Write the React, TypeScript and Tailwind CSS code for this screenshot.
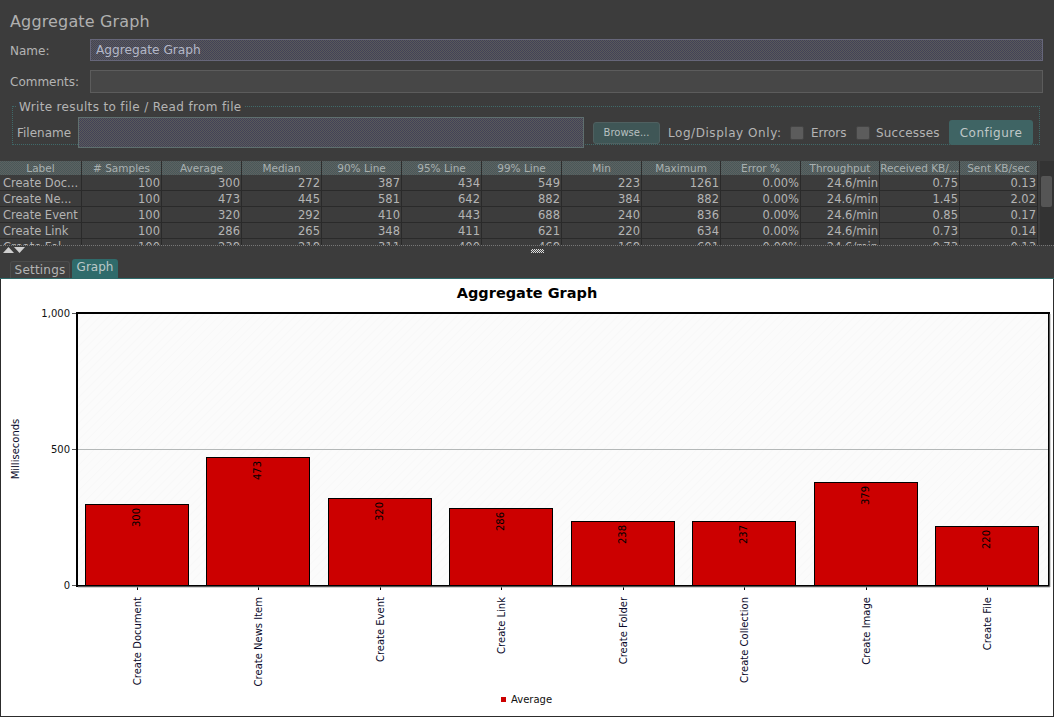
import React from "react";

const cols = "grid grid-cols-[82px_80px_80px_80px_80px_80px_80px_80px_79px_80px_79px_80px_78px]";
const headers = ["Label", "# Samples", "Average", "Median", "90% Line", "95% Line", "99% Line", "Min", "Maximum", "Error %", "Throughput", "Received KB/...", "Sent KB/sec"];
const rows = [
  ["Create Doc...", "100", "300", "272", "387", "434", "549", "223", "1261", "0.00%", "24.6/min", "0.75", "0.13"],
  ["Create Ne...", "100", "473", "445", "581", "642", "882", "384", "882", "0.00%", "24.6/min", "1.45", "2.02"],
  ["Create Event", "100", "320", "292", "410", "443", "688", "240", "836", "0.00%", "24.6/min", "0.85", "0.17"],
  ["Create Link", "100", "286", "265", "348", "411", "621", "220", "634", "0.00%", "24.6/min", "0.73", "0.14"],
  ["Create Fol...", "100", "238", "218", "311", "400", "468", "168", "601", "0.00%", "24.6/min", "0.73", "0.13"],
];
const bars = [
  { x: 85, v: 300, top: 504, name: "Create Document" },
  { x: 206, v: 473, top: 457, name: "Create News Item" },
  { x: 328, v: 320, top: 498, name: "Create Event" },
  { x: 449, v: 286, top: 508, name: "Create Link" },
  { x: 571, v: 238, top: 521, name: "Create Folder" },
  { x: 692, v: 237, top: 521, name: "Create Collection" },
  { x: 814, v: 379, top: 482, name: "Create Image" },
  { x: 935, v: 220, top: 526, name: "Create File" },
];
const dither = "bg-[conic-gradient(#424258_25%,#5a5a5a_0_50%,#424258_0_75%,#5a5a5a_0)] bg-[length:2px_2px]";

function Chart() {
  const f = "'DejaVu Sans', sans-serif";
  return (
    <svg width="1052" height="437" viewBox="1 279 1052 437" className="block">
      <defs>
        <pattern id="hatch" width="6" height="6" patternUnits="userSpaceOnUse" patternTransform="rotate(45)">
          <rect width="6" height="6" fill="#fbfbfb" />
          <line x1="0" y1="0" x2="0" y2="6" stroke="#f8f8f8" strokeWidth="2" />
        </pattern>
      </defs>
      <rect x="1" y="279" width="1052" height="437" fill="#fff" />
      <text x="527" y="298" textAnchor="middle" fontFamily={f} fontWeight="700" fontSize="14.5" fill="#000">Aggregate Graph</text>
      <rect x="77" y="313" width="972" height="273" fill="url(#hatch)" />
      <line x1="77" y1="449.5" x2="1049" y2="449.5" stroke="#b4b8b8" />
      <line x1="72" y1="313.5" x2="77" y2="313.5" stroke="#555" />
      <line x1="72" y1="449.5" x2="77" y2="449.5" stroke="#555" />
      <line x1="72" y1="585.5" x2="77" y2="585.5" stroke="#555" />
      <text x="70" y="317" textAnchor="end" fontFamily={f} fontSize="10" fill="#111">1,000</text>
      <text x="70" y="453" textAnchor="end" fontFamily={f} fontSize="10" fill="#111">500</text>
      <text x="70" y="589" textAnchor="end" fontFamily={f} fontSize="10" fill="#111">0</text>
      <text transform="translate(19 449) rotate(-90)" textAnchor="middle" fontFamily={f} fontSize="10" fill="#0a0a2a">Milliseconds</text>
      {bars.map((b) => (
        <g key={b.name}>
          <rect x={b.x + 0.5} y={b.top + 0.5} width="103" height={585 - b.top} fill="#cc0000" stroke="#000" />
          <text transform={`translate(${b.x + 55} ${b.top + 4}) rotate(-90)`} textAnchor="end" fontFamily={f} fontSize="10" fill="#000">{b.v}</text>
          <line x1={b.x + 52.5} y1="586" x2={b.x + 52.5} y2="590" stroke="#000" />
          <text transform={`translate(${b.x + 56} 597) rotate(-90)`} textAnchor="end" fontFamily={f} fontSize="10" fill="#0a0a2a">{b.name}</text>
        </g>
      ))}
      <rect x="77" y="313" width="972" height="273" fill="none" stroke="#000" strokeWidth="2" />
      <line x1="78" y1="587" x2="1050" y2="587" stroke="#aaa" />
      <line x1="1050" y1="314" x2="1050" y2="587" stroke="#aaa" />
      <rect x="501" y="697" width="5" height="5" fill="#cc0000" />
      <text x="511" y="703" fontFamily={f} fontSize="10" fill="#111">Average</text>
    </svg>
  );
}

export default function App() {
  return (
    <div className="w-[1054px] h-[717px] overflow-hidden bg-[#3c3c3c] text-[#b4b4b4] font-['DejaVu_Sans',sans-serif] flex flex-col">
      <div className="h-[160px] shrink-0 pl-[10px] pt-[12px]">
        <div className="text-[16px] leading-[20px] h-[27px] tracking-[0.15px] text-[#b0b0b0]">Aggregate Graph</div>
        <div className="flex items-center h-[22px]">
          <div className="w-[80px] text-[12px] pt-[1px]">Name:</div>
          <div className={`w-[953px] h-[22px] border border-[#66667a] pl-[5px] text-[12.2px] leading-[21px] text-[#b4b8c8] ${dither}`}>Aggregate Graph</div>
        </div>
        <div className="flex items-center h-[23px] mt-[9px]">
          <div className="w-[80px] text-[12px] whitespace-nowrap">Comments:</div>
          <div className="w-[953px] h-[23px] border border-[#5c5c5c] bg-[#474747]" />
        </div>
        <fieldset className="w-[1028px] ml-[2px] mt-[6px] h-[46px] border border-dotted border-[#3f6a6a]">
          <legend className="ml-[4px] px-[2px] text-[12px] leading-[14px] tracking-[0.35px] relative top-[1px]">Write results to file / Read from file</legend>
          <div className="flex items-center h-[31px] pl-[3px] mt-[4px]">
            <div className="w-[62px] pl-[1px] text-[12px] whitespace-nowrap">Filename</div>
            <div className={`w-[506px] h-[31px] border border-[#5f6f6f] ${dither}`} />
            <div className="ml-[9px] w-[67px] h-[22px] rounded-[3px] border border-[#4f6060] bg-[#3f5656] text-[10px] leading-[20px] text-center text-[#b8c0c0]">Browse...</div>
            <div className="ml-[8px] text-[12px] w-[122px] whitespace-nowrap tracking-[0.55px]">Log/Display Only:</div>
            <div className="w-[14px] h-[14px] rounded-[2px] bg-[#5c5c5c] border border-[#444]" />
            <div className="ml-[7px] w-[45px] text-[12px]">Errors</div>
            <div className="w-[14px] h-[14px] rounded-[2px] bg-[#5c5c5c] border border-[#444]" />
            <div className="ml-[6px] w-[73px] text-[12px] tracking-[0.2px]">Successes</div>
            <div className="w-[84px] h-[25px] rounded-[3px] bg-[#3f6464] text-[12px] leading-[26px] text-center text-[#c0c8c8] tracking-[0.5px]">Configure</div>
          </div>
        </fieldset>
      </div>

      <div className="h-[86px] shrink-0 flex pt-[1px] border-b border-dotted border-[#777]">
        <div className="w-[1038px] h-full overflow-hidden">
          <div className={`${cols} h-[14px] bg-[conic-gradient(#465a5a_25%,#606060_0_50%,#465a5a_0_75%,#606060_0)] bg-[length:2px_2px]`}>
            {headers.map((h) => (
              <div key={h} className="text-center text-[10.5px] leading-[14px] whitespace-nowrap overflow-hidden text-[#a8b0b0] border-r border-[#2e2e2e]">{h}</div>
            ))}
          </div>
          {rows.map((r) => (
            <div key={r[0]} className={`${cols} h-[16px] border-b border-[#2a2a2a]`}>
              {r.map((c, i) => (
                <div key={i} className={`text-[11.5px] leading-[16px] whitespace-nowrap overflow-hidden border-r border-[#2a2a2a] text-[#b4b4b4] ${i === 0 ? "text-left pl-[3px]" : "text-right pr-[1px]"}`}>{c}</div>
              ))}
            </div>
          ))}
        </div>
        <div className="ml-[2px] w-[14px] h-full bg-[#333] pt-[15px] pl-[1px] pr-[2px]">
          <div className="h-[31px] rounded-[2px] bg-[#555]" />
        </div>
      </div>

      <div className="h-[32px] shrink-0 relative">
        <div className="flex items-start pl-[3px] pt-[1px] gap-[1px] h-[9px]">
          <svg width="22" height="7" viewBox="0 0 22 7">
            <polygon points="0,6 5.5,0 11,6" fill="#cfcfcf" />
            <polygon points="11,0 22,0 16.5,6" fill="#cfcfcf" />
          </svg>
          <div className="ml-[505px] mt-[2px] w-[13px] h-[4px] bg-[conic-gradient(#ddd_25%,#444_0_50%,#ddd_0_75%,#444_0)] bg-[length:2px_2px]" />
        </div>
        <div className="flex items-end pl-[10px] h-[23px] gap-[2px]">
          <div className="w-[60px] h-[17px] rounded-t-[3px] bg-[#404040] border-t border-x border-[#4c4c4c] text-[12px] leading-[17px] text-center tracking-[0.2px]">Settings</div>
          <div className="w-[46px] h-[19px] rounded-t-[3px] bg-[#2f6b6b] text-[12px] leading-[17px] text-center text-[#bcc8c8]">Graph</div>
        </div>
      </div>

      <div className="flex-1 border-t border-[#2f6b6b] px-[1px] pb-[1px] bg-[#2c2c2c] min-h-0">
        <Chart />
      </div>
    </div>
  );
}
